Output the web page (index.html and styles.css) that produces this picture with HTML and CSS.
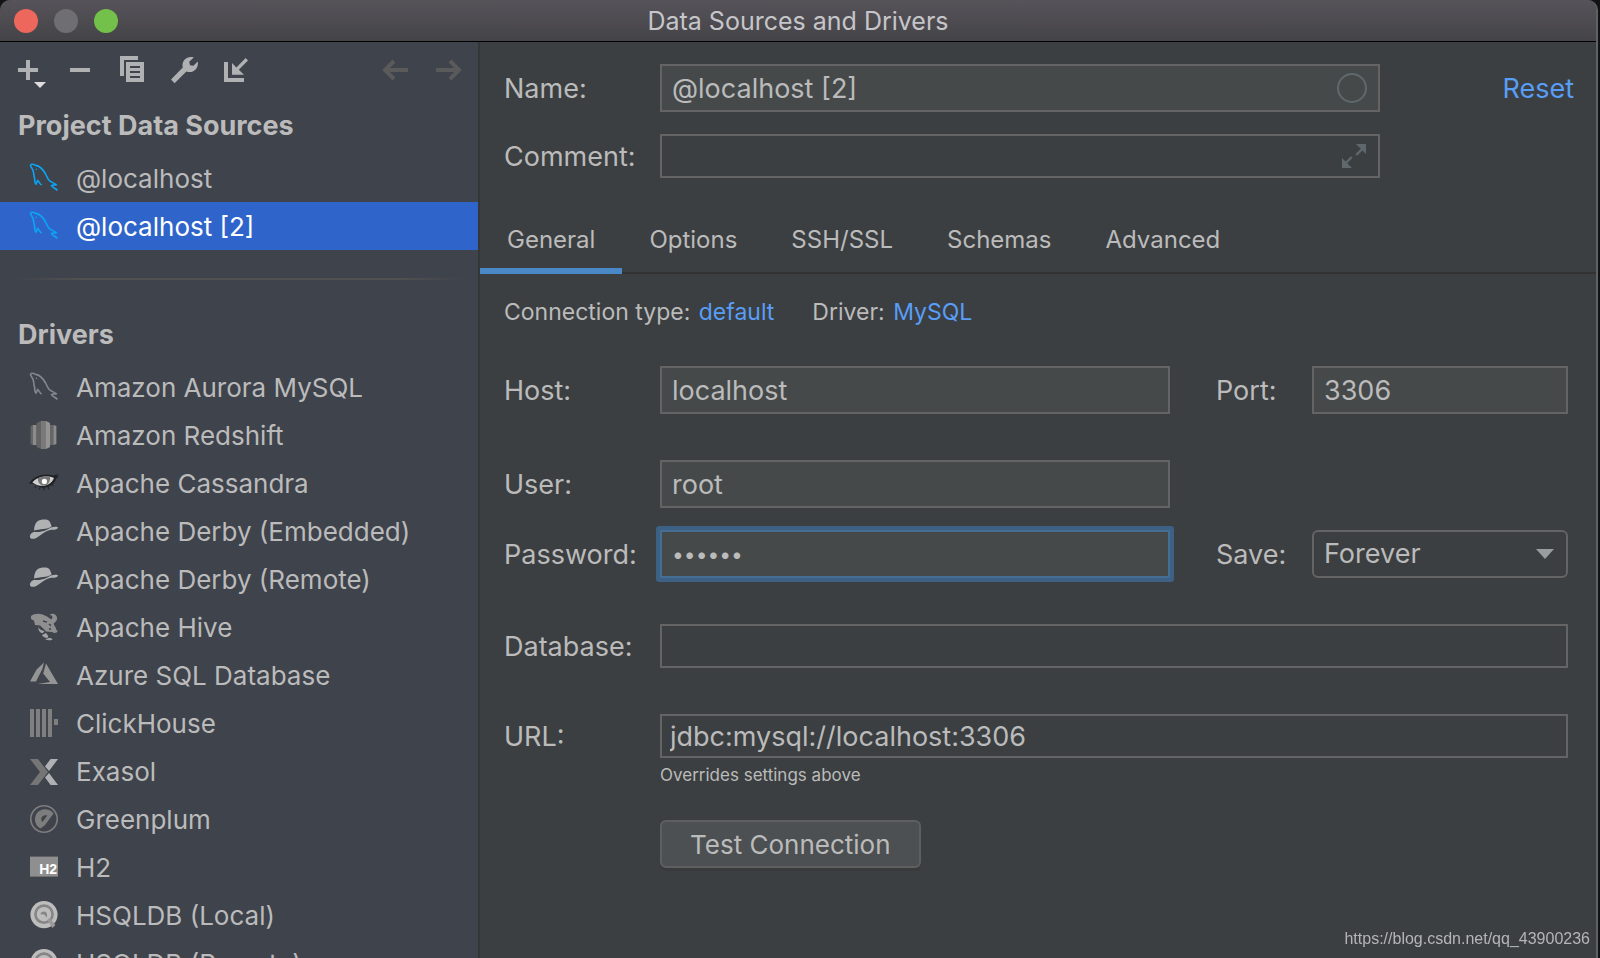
FILE: index.html
```
<!DOCTYPE html>
<html lang="en">
<head>
  <meta charset="utf-8">
  <title>Data Sources and Drivers</title>
  <link rel="stylesheet" href="styles.css">
</head>
<body>
  <!-- shared icons -->
  <svg class="sprite" aria-hidden="true">
    <symbol id="dolphin" viewBox="0 0 16 16">
      <path d="M1.2 1.4C1.9.9 2.9 1.2 3.8 1.7 6 2 7.8 4.2 8.8 6c.7 1.4 1 2.7 2.2 3.6 1 .7 2.2.9 3.2 1.8-.8.1-1.7 0-2.5.4.5.9 2 1.3 3 2.4M1.2 1.4c.2 1.2.9 1.7 1.3 2.8.5 1.2.2 2.5.8 3.8 0 1.3 0 2.3.7 3.1.5-.5.3-1.4.9-1.9.6.8 1 1.8 1.9 2.4" fill="none" stroke="currentColor" stroke-width=".8" stroke-linejoin="round"/>
      <circle cx="4.2" cy="3.6" r=".4" fill="currentColor"/>
    </symbol>
    <symbol id="hat" viewBox="0 0 16 16">
      <path d="M3 7.8C3.2 5 4 2.8 6.6 2.4c1.7-.3 3.2-.2 4 .6.7.8.9 1.9 1.2 2.7C9.5 7.2 6 6.9 3 7.8z" fill="#afb1b3"/>
      <path d="M2.8 8.5c2.7.2 5-.2 7.3-1.500 1.600-1 3.300-1.300 4.900-.9-.2 1.200-2 1.300-3.500 1.300-2.300.5-4.200 1.900-6 3.200-1.500 1.200-3.500 1.800-4.300.9C.5 10.500 1.500 9 2.800 8.500z" fill="#afb1b3"/>
    </symbol>
    <symbol id="hsql" viewBox="0 0 16 16">
      <circle cx="8" cy="7.8" r="6.8" fill="#bdbdbd"/>
      <circle cx="8" cy="7.6" r="4.3" fill="none" stroke="#858585" stroke-width="1.3"/>
      <path d="M9.6 10.5l1.400-1 2.700 3.500-1.500 1.500z" fill="#9a9a9a"/>
      <path d="M6.3 7.6c0-1.800 3.200-1.800 3.200.2v1.400L8.100 7.800z" fill="#858585"/>
    </symbol>
  </svg>

  <div class="window">
    <header class="titlebar">
      <div class="lights">
        <button class="light red" aria-label="Close"></button>
        <button class="light gray" aria-label="Minimize"></button>
        <button class="light green" aria-label="Zoom"></button>
      </div>
      <h1>Data Sources and Drivers</h1>
    </header>

    <div class="content">
      <aside class="sidebar">
        <div class="toolbar">
          <button aria-label="Add"><svg viewBox="0 0 16 16"><path d="M7 3h2v4h4v2H9v4H7V9H3V7h4z"/><path d="M11 14h6l-3 3z" fill="#dddddd"/></svg></button>
          <button aria-label="Remove"><svg viewBox="0 0 16 16"><path d="M3 7h10v2H3z"/></svg></button>
          <button aria-label="Duplicate"><svg viewBox="0 0 16 16"><path d="M2 1h9v2H4v8H2z"/><path fill-rule="evenodd" d="M5 4h9v10H5zM7 6v1h5V6zM7 8.5v1h5v-1zM7 11v1h5v-1z"/></svg></button>
          <button aria-label="Properties"><svg viewBox="0 0 16 16"><path d="M12.9 1.7 10.6 3.9 11 5.6 12.7 5.9 14.9 3.7C15.4 6.6 13.4 9 10.9 9 10.3 9 9.7 8.9 9.2 8.7L3.3 14.6 1.5 12.7 7.4 6.8C6.6 3.8 9 .7 12.9 1.7z"/></svg></button>
          <button aria-label="Import"><svg viewBox="0 0 16 16"><path d="M2 4h2v8h8v2H2z"/><path d="M6 4.5 8.2 6.7 12.8 2 14 3.2 9.4 7.9 12 10.4H6z"/></svg></button>
          <span class="spacer"></span>
          <button aria-label="Back" disabled><svg viewBox="0 0 16 16"><path d="M7 3.5 2.5 8 7 12.5M2.5 8H14" fill="none" stroke="#5a5a5a" stroke-width="2"/></svg></button>
          <button aria-label="Forward" disabled><svg viewBox="0 0 16 16"><path d="M9 3.5 13.5 8 9 12.5M13.5 8H2" fill="none" stroke="#5a5a5a" stroke-width="2"/></svg></button>
        </div>

        <h2>Project Data Sources</h2>
        <ul class="list">
          <li><button class="item blue"><svg><use href="#dolphin"/></svg><span>@localhost</span></button></li>
          <li><button class="item blue selected"><svg><use href="#dolphin"/></svg><span>@localhost [2]</span></button></li>
        </ul>
        <hr class="divider">
        <h2>Drivers</h2>
        <ul class="list">
          <li><button class="item"><svg><use href="#dolphin"/></svg><span>Amazon Aurora MySQL</span></button></li>
          <li><button class="item"><svg viewBox="0 0 16 16"><path d="M1.3 3.5 2.5 3v10l-1.2-.5zM11 3h1.700v10H11z" fill="#666"/><path d="M2.500 3h1.800v10H2.500zM12.700 3l1.500.5v9l-1.500.5z" fill="#8c8c8c"/><path d="M4.300 2 6.500 1v14l-2.200-1z" fill="#636363"/><path d="M6.500 1H9v14H6.500z" fill="#7a7a7a"/><path d="M9 1l2 1v12l-2 1z" fill="#949494"/></svg><span>Amazon Redshift</span></button></li>
          <li><button class="item"><svg viewBox="0 0 16 16"><path d="M.5 8.2C3 4.5 8 2.9 12.5 4.2l3-.7-1.200 1.100 1.200.1-1.500 1.200C13 9.500 9 11.200 5.300 9.900L3 8.500z" fill="#202124"/><path d="M2.200 7.700C4.500 4.800 9.500 4.100 13 5.500 11.500 9.200 7 11 2.200 7.700z" fill="#d0d0d0"/><path d="M5 5.600c2-.9 4.200-1 6-.6.2 2.300-1 4.200-3 4.200S4.700 7.600 5 5.600z" fill="#777"/><circle cx="8.200" cy="7.200" r="1.300" fill="#fff"/><path d="M4 9.500l-.5 1M6 10.200l-.3 1.200M8 10.200v1.500M10 9.800l.5 1.400M12 8.600l.7 1" stroke="#202124" stroke-width=".5"/></svg><span>Apache Cassandra</span></button></li>
          <li><button class="item"><svg><use href="#hat"/></svg><span>Apache Derby (Embedded)</span></button></li>
          <li><button class="item"><svg><use href="#hat"/></svg><span>Apache Derby (Remote)</span></button></li>
          <li><button class="item"><svg viewBox="0 0 16 16"><path d="M1.5 2.5C3.5.8 7 1 9.500 2.800l2.200 1.400c1-.9.500-1.900-.9-2.400 1.900-1.200 4 .2 3.700 2.300-.3 1.100-1 1.700-1.700 2.100.2 1.200 1.600 2.300 1.300 3.300l.7.2c0 1.500-2 1.500-2.700.8L9 10.300 7.600 8.700 6 7.200 3.500 7 3 4.900 1.500 4z" fill="#8f8f8f"/><path d="M5.200 8c.3 1.200 1.600 1.800 3 2l-.8 1.100C6.300 11 5 10 5.200 8zM7 12l2-1 1.200 1.600-.5.9C8.500 13.500 7.500 13 7 12zM8.600 14.100c1.500-.5 2-.9 3.200-.4l.5.5c-1.200.7-2.700.5-3.700-.1z" fill="#a3a3a3"/><path d="M7.500 5 9.500 5.600M10.500 6.500l1 .8M10.500 9h1" stroke="#3f434c" stroke-width=".7"/></svg><span>Apache Hive</span></button></li>
          <li><button class="item"><svg viewBox="0 0 16 16"><path d="M8 1.700 7.200 5 4 11.200H1L4.300 5.300zM9 2.200l6 10.300H4.700L11 11.500 7.600 7.300z" fill="#959595"/></svg><span>Azure SQL Database</span></button></li>
          <li><button class="item"><svg viewBox="0 0 16 16"><path d="M1 1h2v14H1zM4 1h2v14H4zM7 1h2v14H7zM10 1h2v14h-2zM13 6h2v3h-2z" fill="#7f7f7f"/></svg><span>ClickHouse</span></button></li>
          <li><button class="item"><svg viewBox="0 0 16 16"><path d="M1 2h4l5 6.500L5 15H1l5-6.500z" fill="#757575"/><path d="M11.300 2H15l-4.500 6-2-2.300zM10.500 9 15 15h-3.700L8.500 11.300z" fill="#afb1b3"/></svg><span>Exasol</span></button></li>
          <li><button class="item"><svg viewBox="0 0 16 16"><circle cx="8" cy="8" r="6.600" fill="none" stroke="#7d7d7d" stroke-width=".8"/><path d="M12.800 5.200C10.500 2.200 6 2.600 4.300 5.300c-1.700 3-.5 6.200 1.900 7.500l2.100-1.600zM9.700 6.300 7.200 9.500C5.700 7.700 7.400 5.400 9.700 6.300z" fill="#7d7d7d" fill-rule="evenodd"/></svg><span>Greenplum</span></button></li>
          <li><button class="item"><svg viewBox="0 0 16 16"><path d="M1 2.800h14v10H1z" fill="#8f8f8f"/><text x="5.600" y="11.700" class="h2-mark">H2</text></svg><span>H2</span></button></li>
          <li><button class="item"><svg><use href="#hsql"/></svg><span>HSQLDB (Local)</span></button></li>
          <li><button class="item"><svg><use href="#hsql"/></svg><span>HSQLDB (Remote)</span></button></li>
        </ul>
      </aside>

      <main class="panel">
        <div class="top-form">
          <label for="name">Name:</label>
          <div class="with-icon">
            <input type="text" id="name" class="field" value="@localhost [2]">
            <svg class="field-icon" viewBox="0 0 16 16"><circle cx="8" cy="8" r="7" fill="none" stroke="#5f686c"/></svg>
          </div>
          <a href="#" class="reset">Reset</a>

          <label for="comment">Comment:</label>
          <div class="with-icon">
            <input type="text" id="comment" class="field plain">
            <svg class="field-icon" viewBox="0 0 16 16"><path d="M10 2h5v5l-1.800-1.800-2.700 2.700-.8-.8 2.700-2.700zM3 9l1.800 1.800L7.500 8.100l.8.8-2.700 2.700L8 14H3z" fill="#5f686c"/></svg>
          </div>
        </div>

        <nav class="tabs">
          <button class="tab active">General</button>
          <button class="tab">Options</button>
          <button class="tab">SSH/SSL</button>
          <button class="tab">Schemas</button>
          <button class="tab">Advanced</button>
        </nav>

        <div class="connection">
          <span>Connection type: <a href="#">default</a></span>
          <span>Driver: <a href="#">MySQL</a></span>
        </div>

        <form class="settings">
          <div class="row">
            <label for="host">Host:</label>
            <input type="text" id="host" class="field" value="localhost">
            <label for="port" class="second">Port:</label>
            <input type="text" id="port" class="field" value="3306">
          </div>
          <div class="row close">
            <label for="user">User:</label>
            <input type="text" id="user" class="field" value="root">
          </div>
          <div class="row">
            <label for="password">Password:</label>
            <input type="password" id="password" class="field focused" value="secret">
            <label for="save" class="second">Save:</label>
            <div class="with-icon">
              <select id="save" class="field select"><option>Forever</option></select>
              <svg class="arrow" viewBox="0 0 18 10"><path d="M0 0h18L9 10z" fill="#9a9da0"/></svg>
            </div>
          </div>
          <div class="row">
            <label for="database">Database:</label>
            <input type="text" id="database" class="field plain wide">
          </div>
          <div class="row url-row">
            <label for="url">URL:</label>
            <input type="text" id="url" class="field plain wide" value="jdbc:mysql://localhost:3306">
            <small class="hint">Overrides settings above</small>
          </div>
          <div class="row">
            <button type="button" class="test">Test Connection</button>
          </div>
        </form>
      </main>
    </div>
  </div>
  <div class="watermark">https://blog.csdn.net/qq_43900236</div>
</body>
</html>
```

FILE: styles.css
```
* {
  box-sizing: border-box;
}
body {
  margin: 0;
  height: 100vh;
  overflow: hidden;
  background: #111314;
  color: #bbbbbb;
  font-family: Inter, "Liberation Sans", sans-serif;
  font-size: 27px;
  line-height: 32px;
}
button, input, select {
  font: inherit;
  color: inherit;
}
button {
  border: none;
  background: none;
  padding: 0;
}
a {
  color: #589df6;
  text-decoration: none;
}
label, .reset, .item span {
  padding-top: 2px;
}
.sprite {
  display: none;
}
.window {
  height: 100vh;
  margin-right: 2px;
  display: flex;
  flex-direction: column;
  overflow: hidden;
  border-right: 2px solid #5f6263;
  border-radius: 10px 10px 0 0;
  background: #3c3f41;
}

/* title bar */
.titlebar {
  flex: none;
  display: grid;
  grid-template-columns: 1fr auto 1fr;
  align-items: center;
  height: 42px;
  padding: 0 14px;
  background: linear-gradient(#56545a, #444347);
  border-bottom: 1px solid #000000;
}
.titlebar h1 {
  margin: 0;
  font-size: 25px;
  font-weight: normal;
  color: #c6c5c9;
}
.lights {
  display: flex;
  gap: 16px;
}
.light {
  width: 24px;
  height: 24px;
  border-radius: 50%;
}
.red { background: #ee675c; }
.gray { background: #6f6e73; }
.green { background: #73c04a; }

.content {
  flex: 1;
  min-height: 0;
  display: grid;
  grid-template-columns: 480px 1fr;
}

/* sidebar */
.sidebar {
  overflow: hidden;
  background: #3f434c;
  border-right: 2px solid #353638;
}
.toolbar {
  display: flex;
  align-items: center;
  gap: 20px;
  height: 56px;
  padding: 0 14px 0 12px;
}
.toolbar button, .toolbar svg {
  display: block;
  width: 32px;
  height: 32px;
  overflow: visible;
  fill: #afb1b3;
}
.spacer {
  flex: 1;
}
.sidebar h2 {
  margin: 0;
  padding: 0 18px;
  font-size: 27px;
  font-weight: bold;
  line-height: 56px;
}
.list {
  list-style: none;
  margin: 0;
  padding: 0;
}
.item {
  display: flex;
  align-items: center;
  gap: 16px;
  width: 100%;
  height: 48px;
  padding: 0 28px;
  font-size: 26px;
  white-space: nowrap;
}
.item svg {
  flex: none;
  width: 32px;
  height: 32px;
  color: #85888b;
}
.item.blue svg {
  color: #0ba5f5;
}
.item.selected {
  background: #2f65ca;
  color: #ffffff;
}
.h2-mark {
  font-size: 7px;
  font-weight: bold;
  font-family: "Liberation Sans", sans-serif;
  fill: #ffffff;
}
.divider {
  height: 2px;
  margin: 28px 14px 27px;
  border: none;
  background: linear-gradient(to right, transparent, #515151 15%, #515151 85%, transparent);
}

/* right panel */
.panel {
  min-width: 0;
}
.top-form {
  display: grid;
  grid-template-columns: 156px 1fr 216px;
  align-items: center;
  row-gap: 22px;
  padding: 22px 0 28px 24px;
}
.reset {
  padding-right: 22px;
  text-align: right;
}
.field {
  display: block;
  width: 100%;
  min-width: 0;
  height: 48px;
  padding: 0 10px;
  border: 2px solid #646464;
  border-radius: 0;
  background: #45494a;
  outline: none;
}
.field.plain {
  height: 44px;
  padding: 0 8px;
  background: transparent;
}
.field.focused {
  border-color: #466d94;
  border-radius: 1px;
  box-shadow: 0 0 0 4px #3d6185;
  font-size: 21px;
}
.with-icon {
  position: relative;
}
.field-icon {
  position: absolute;
  top: 0;
  bottom: 0;
  right: 12px;
  width: 32px;
  height: 32px;
  margin: auto;
}
.field.select {
  appearance: none;
  border-radius: 6px;
  background: transparent;
}
.arrow {
  position: absolute;
  top: 0;
  bottom: 0;
  right: 14px;
  width: 18px;
  height: 10px;
  margin: auto;
}

.tabs {
  display: flex;
  height: 68px;
  border-bottom: 2px solid #323232;
}
.tab {
  height: 68px;
  padding: 6px 27px 0;
  font-size: 24px;
  border-bottom: 6px solid transparent;
}
.tab.active {
  border-bottom-color: #4a88c7;
}

.connection {
  display: flex;
  gap: 38px;
  padding: 22px 24px 0;
  font-size: 23px;
}
.connection a {
  margin-left: 2px;
}

.settings {
  display: flex;
  flex-direction: column;
  gap: 46px;
  padding: 38px 28px 0 24px;
}
.row {
  display: grid;
  grid-template-columns: 156px 1fr 142px 256px;
  align-items: center;
}
.row.close {
  margin-bottom: -24px;
}
.second {
  padding-left: 46px;
}
.wide {
  grid-column: 2 / -1;
}
.url-row {
  margin-bottom: -14px;
}
.hint {
  grid-column: 2 / -1;
  padding-top: 4px;
  font-size: 17px;
  line-height: 26px;
}
.test {
  grid-column: 2;
  justify-self: start;
  height: 48px;
  padding: 2px 28px 0;
  border: 2px solid #5e6060;
  border-radius: 6px;
  background: #4c5052;
  box-shadow: 0 3px 0 #383a3c;
  font-size: 26px;
}

.watermark {
  position: fixed;
  right: 10px;
  bottom: 8px;
  font-family: "Liberation Sans", sans-serif;
  font-size: 16px;
  line-height: 22px;
  color: #b4b5b6;
}
```
